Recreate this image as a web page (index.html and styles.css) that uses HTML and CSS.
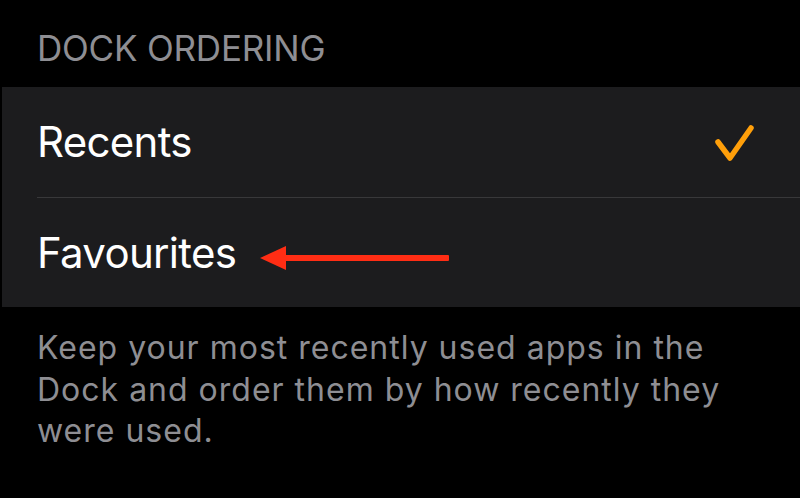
FILE: index.html
```html
<!DOCTYPE html>
<html>
<head>
<meta charset="utf-8">
<link rel="stylesheet" href="styles.css">
</head>
<body>
<div class="screen">
  <div class="section-header">DOCK ORDERING</div>
  <div class="group">
    <div class="row">
      <span class="label">Recents</span>
      <svg class="check" width="44" height="44" viewBox="0 0 44 44">
        <path d="M6 21 L18 37 L39 7" fill="none" stroke="#ff9f0a" stroke-width="5.5" stroke-linecap="round" stroke-linejoin="round"/>
      </svg>
    </div>
    <div class="row">
      <span class="label">Favourites</span>
      <svg class="arrow" width="189" height="26" viewBox="0 0 189 26">
        <polygon points="0,13 26,1 26,25" fill="#ff2d14"/>
        <rect x="20" y="10" width="169" height="6" rx="1" fill="#ff2d14"/>
      </svg>
    </div>
  </div>
  <p class="footer">Keep your most recently used apps in the Dock and order them by how recently they were used.</p>
</div>
</body>
</html>
```

FILE: styles.css
```css
html, body {
  margin: 0;
  padding: 0;
  background: #000;
}
.screen {
  width: 800px;
  height: 498px;
  overflow: hidden;
  font-family: Inter, "Noto Sans", sans-serif;
}
.section-header {
  height: 87px;
  box-sizing: border-box;
  padding: 26px 0 0 37px;
  font-size: 35px;
  line-height: 44px;
  color: #8e8e93;
  letter-spacing: -0.2px;
}
.group {
  margin-left: 2px;
  background: #1c1c1e;
}
.row {
  height: 110px;
  box-sizing: border-box;
  margin-left: 35px;
  padding-right: 44px;
  display: flex;
  align-items: center;
  color: #fff;
  font-size: 42px;
  letter-spacing: -0.7px;
}
.row + .row {
  border-top: 1px solid #38383a;
}
.label {
  line-height: 50px;
}
.check {
  margin-left: auto;
  margin-top: 2px;
}
.arrow {
  margin-left: 24px;
  margin-top: 10px;
}
.footer {
  margin: 0;
  padding: 20px 50px 0 37px;
  font-size: 32px;
  line-height: 41.5px;
  color: #8e8e93;
  letter-spacing: 1px;
}
```
